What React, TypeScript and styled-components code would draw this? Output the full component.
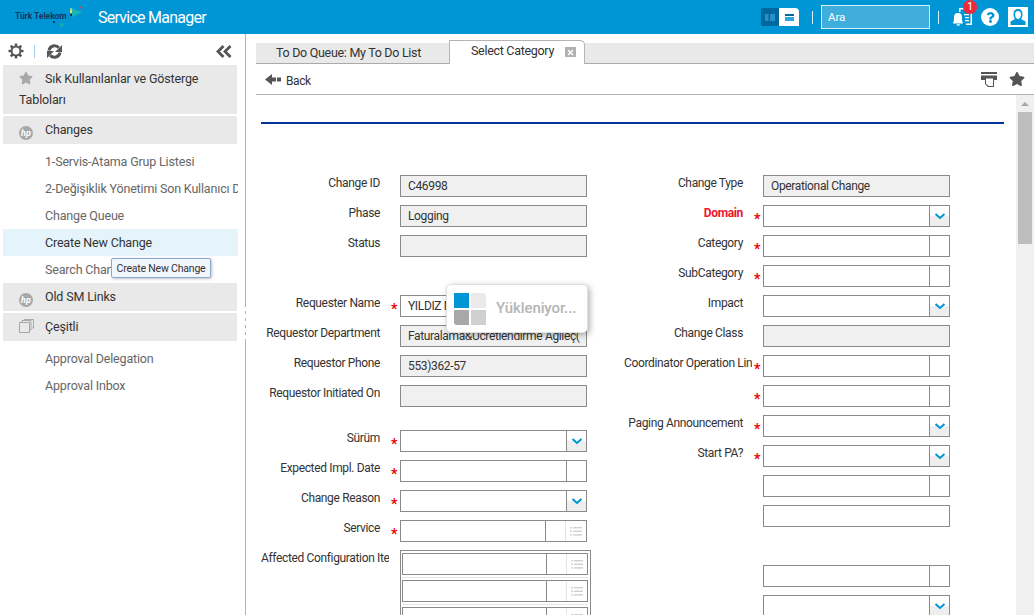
import React from "react";
import styled, { createGlobalStyle } from "styled-components";
import { FaStar, FaQuestion } from "react-icons/fa";

const Global = createGlobalStyle`
  html, body { margin: 0; padding: 0; height: 100%; overflow: hidden; background: #fff; }
  body { font-family: Roboto, "Liberation Sans", sans-serif; font-size: 12px; color: #222; }
  #root { height: 100%; }
  * { box-sizing: border-box; }
`;

const Page = styled.div`
  width: 1034px; height: 615px; display: flex; flex-direction: column; overflow: hidden; position: relative;
`;
const Header = styled.header`
  height: 34px; flex: none; background: #0096d6; display: flex; align-items: center; color: #fff;
`;
const Brand = styled.div`
  width: 98px; height: 34px; flex: none; position: relative;
`;
const BrandText = styled.span`
  position: absolute; left: 15px; top: 11px; font-size: 8.5px; font-weight: 700; letter-spacing: -0.05px; color: #16375e; line-height: 11px; white-space: nowrap;
`;
const BrandMark = styled.svg`
  position: absolute; left: 50px; top: 4px;
`;
const Title = styled.div`
  font-size: 16px; letter-spacing: -0.75px; font-weight: 400; flex: 1;
`;
const HeaderTools = styled.div`
  display: flex; align-items: center; padding-right: 6px;
`;
const ViewToggle = styled.div`
  display: flex; margin-right: 13px;
`;
const ToggleButton = styled.div<{ $active?: boolean }>`
  width: ${(p) => (p.$active ? "20px" : "18px")}; height: 18px; display: flex; align-items: center; justify-content: center;
  background: ${(p) => (p.$active ? "#fff" : "#00689f")};
  border-radius: ${(p) => (p.$active ? "0 4px 0 0" : "2px 0 0 2px")};
`;
const Sep = styled.div`
  width: 1px; height: 13px; background: #d6eefa;
`;
const SearchBox = styled.div`
  width: 109px; height: 24px; margin: 0 8px; border: 1px solid #d8f0fb; background: #40aedd; color: #fff;
  font-size: 11.5px; padding: 0 6px; display: flex; align-items: center; letter-spacing: -.1px;
`;
const Notify = styled.div`
  width: 19px; height: 18px; margin-left: 14px; position: relative;
`;
const Badge = styled.span`
  position: absolute; left: 10px; top: -8px; width: 14px; height: 14px; border-radius: 50%; background: #f0283c;
  color: #fff; font-size: 11px; line-height: 14px; text-align: center;
`;
const HelpIcon = styled.div`
  width: 18px; height: 18px; border-radius: 50%; background: #fff; color: #0096d6; margin-left: 9px;
  display: flex; align-items: center; justify-content: center; font-size: 11px;
`;
const UserIcon = styled.div`
  width: 20px; height: 20px; background: #fff; margin-left: 9px; overflow: hidden;
`;

const Body = styled.div`
  flex: 1; display: flex; min-height: 0;
`;
const Sidebar = styled.aside`
  width: 246px; flex: none; border-right: 1px solid #b4b4b4; padding: 0 8px 0 3px; position: relative;
`;
const Splitter = styled.div`
  position: absolute; right: -1px; top: 270px; width: 1px; height: 38px; background: repeating-linear-gradient(to bottom, #b4b4b4 0 3px, #fff 3px 7px);
`;
const SideTools = styled.div`
  height: 31px; display: flex; align-items: center; color: #555; padding: 3px 5px 0 5px;
`;
const SideSep = styled.div`
  width: 1px; height: 13px; background: #a9cdea; margin: 0 12px 0 10px;
`;
const Spacer = styled.div`
  flex: 1;
`;
const SectionHead = styled.div<{ $tall?: boolean }>`
  background: #e9e9e9; margin-bottom: 2px; color: #333; font-size: 12.5px; line-height: 21px; letter-spacing: -.15px;
  padding: 3px 8px 0 16px;
  height: ${(p) => (p.$tall ? "49px" : "28px")};
`;
const SectionIcon = styled.span`
  display: inline-flex; width: 26px; vertical-align: -2px; letter-spacing: 0;
`;
const HpBadge = styled.span`
  display: inline-block; width: 14px; height: 14px; border-radius: 50%; background: #a8a8a8; color: #fff;
  font-size: 9px; font-style: italic; font-weight: 700; line-height: 14px; text-align: center;
`;
const LinkList = styled.div`
  padding-top: 2px;
`;
const SideLink = styled.div<{ $active?: boolean }>`
  height: 27px; line-height: 27px; padding-left: 42px; font-size: 12.5px; letter-spacing: -.17px; white-space: nowrap; overflow: hidden;
  color: ${(p) => (p.$active ? "#333" : "#666")};
  background: ${(p) => (p.$active ? "#e5f4fb" : "transparent")};
  margin-right: -1px;
`;
const Tooltip = styled.div`
  position: absolute; left: 111px; top: 224px; width: 100px; height: 20px; background: #f2f6fd; border: 1px solid #8ba9d2;
  border-radius: 2px; box-shadow: 1px 1px 3px rgba(0,0,0,.25); font-size: 10.5px; letter-spacing: -.2px; line-height: 19px; text-align: center; color: #333; white-space: nowrap;
`;

const Main = styled.main`
  flex: 1; min-width: 0; display: flex; flex-direction: column; padding-left: 10px;
`;
const TabStrip = styled.div`
  height: 30px; flex: none; display: flex; align-items: flex-end; position: relative; padding-top: 9px;
`;
const TabBack = styled.div`
  flex: 1; height: 21px; background: #e9e9e9; border-bottom: 1px solid #aaa; display: flex; position: relative;
`;
const Tab = styled.div`
  width: 194px; font-size: 12.5px; letter-spacing: -.3px; line-height: 19px; padding-left: 20px; color: #333; white-space: nowrap;
`;
const ActiveTab = styled.div`
  position: absolute; left: 193px; top: -3px; width: 136px; height: 24px; background: #fff; border: 1px solid #b4b4b4; border-bottom: 0; border-radius: 0 5px 0 0;
  font-size: 12.5px; letter-spacing: -.3px; line-height: 19px; padding-left: 21px; color: #333; white-space: nowrap;
`;
const TabClose = styled.span`
  position: absolute; right: 8px; top: 6px; width: 11px; height: 10px; background: #b0b0b0; display: flex; align-items: center; justify-content: center;
`;
const ToolBar = styled.div`
  height: 31px; flex: none; border-bottom: 1px solid #b4b4b4; display: flex; align-items: center; padding: 0 9px 0 9px; color: #555;
`;
const BackLabel = styled.span`
  font-size: 12px; letter-spacing: -.4px; margin-left: 5px; color: #333; padding-top: 3px;
`;
const PrintIcon = styled.svg`
  margin-right: 12px;
`;
const Content = styled.div`
  flex: 1; min-height: 0; display: flex; overflow: hidden;
`;
const FormArea = styled.div`
  flex: 1; padding: 27px 12px 0 5px; overflow: hidden;
`;
const Rule = styled.div`
  height: 2px; background: #003399; margin-bottom: 51px;
`;
const Columns = styled.div`
  display: flex; gap: 37px;
`;
const Column = styled.div`
  width: 326px; flex: none;
`;
const Row = styled.div<{ $gap?: number }>`
  display: grid; grid-template-columns: 128px 11px 187px; height: 30px; margin-top: ${(p) => p.$gap ?? 0}px;
`;
const Blank = styled.div`
  height: 30px;
`;
const Label = styled.div<{ $long?: boolean; $alert?: boolean }>`
  font-size: 12px; letter-spacing: -.35px; line-height: 16px; white-space: nowrap; overflow: hidden;
  text-align: ${(p) => (p.$long ? "left" : "right")};
  padding-right: ${(p) => (p.$long ? "0" : "9px")};
  color: ${(p) => (p.$alert ? "#f0142d" : "#333")};
  font-weight: ${(p) => (p.$alert ? 700 : 400)};
`;
const Star = styled.div`
  color: #e00; font-size: 14px; font-weight: 700; line-height: 14px; padding: 7px 0 0 2px; overflow: hidden;
`;
const Field = styled.div<{ $readOnly?: boolean }>`
  height: 22px; border: 1px solid #8a8a8a; background: ${(p) => (p.$readOnly ? "#f0f0f0" : "#fff")};
  display: flex; font-size: 12px; letter-spacing: -.35px; line-height: 20px; color: #333; overflow: hidden; position: relative;
`;
const FieldText = styled.span`
  flex: 1; padding-left: 7px; white-space: nowrap; overflow: hidden;
`;
const FieldButton = styled.span`
  width: 20px; flex: none; border-left: 1px solid #8a8a8a; position: relative; display: block; height: 20px;
`;
const DropButton = styled(FieldButton)`
  background: linear-gradient(to bottom, #fff 0 50%, #eee 50% 100%);
  display: flex; align-items: center; justify-content: center;
`;
const LookupButton = styled.span`
  width: 21px; flex: none; border-left: 1px solid #e4e4e4; display: flex; align-items: center; justify-content: center;
`;
const MultiBox = styled.div`
  width: 191px; border: 1px solid #8a8a8a; padding: 2px 2px 2px 1px; display: flex; flex-direction: column; gap: 2px;
`;
const MultiRow = styled.div`
  padding-bottom: 2px; border-bottom: 1px solid #e6e6e6;
`;
const Scrollbar = styled.div`
  width: 18px; flex: none; background: #f0f0f0; display: flex; flex-direction: column; align-items: flex-start; padding-left: 2px;
`;
const ScrollArrow = styled.div`
  width: 0; height: 0; border-left: 4px solid transparent; border-right: 4px solid transparent; border-bottom: 4px solid #a6a6a6; margin: 7px 0 6px 3px;
`;
const ScrollThumb = styled.div`
  width: 14px; height: 132px; background: #bdbdbd;
`;
const Loader = styled.div`
  position: absolute; left: 446px; top: 284px; width: 142px; height: 49px; background: #fff; border: 1px solid #e0e0e0; border-radius: 5px;
  box-shadow: 2px 2px 6px rgba(0,0,0,.3); display: flex; align-items: center; padding-left: 7px; gap: 10px;
`;
const LoaderGrid = styled.div`
  display: grid; grid-template-columns: 15px 15px; grid-template-rows: 15px 15px; gap: 2px;
`;
const LoaderCell = styled.span<{ $c: string; $r?: string }>`
  background: ${(p) => p.$c}; border-radius: ${(p) => p.$r ?? "0"};
`;
const LoaderText = styled.span`
  font-size: 15px; font-weight: 500; color: #b5b5b5; letter-spacing: -.1px; padding-bottom: 2px;
`;

const Chevron = () => (
  <svg width="12" height="8" viewBox="0 0 12 8"><path d="M1.500 2 6 6l4.500-4" fill="none" stroke="#0096d6" strokeWidth="2" /></svg>
);
const ListIcon = () => (
  <svg width="12" height="11" viewBox="0 0 12 11" fill="#d0d0d0">
    <rect x="0" y="1" width="2" height="1.400" /><rect x="3" y="1" width="9" height="1.400" />
    <rect x="0" y="4.600" width="2" height="1.400" /><rect x="3" y="4.600" width="9" height="1.400" />
    <rect x="0" y="8.200" width="2" height="1.400" /><rect x="3" y="8.200" width="9" height="1.400" />
  </svg>
);
const Gear = () => (
  <svg width="16" height="16" viewBox="0 0 16 16" fill="#555">
    <path d="M8 2.500a5.500 5.500 0 1 0 0 11 5.500 5.500 0 0 0 0-11zm0 2a3.500 3.500 0 1 1 0 7 3.500 3.500 0 0 1 0-7z" fillRule="evenodd" />
    {[0, 45, 90, 135, 180, 225, 270, 315].map((a) => (
      <rect key={a} x="6.800" y="0.500" width="2.400" height="2.500" transform={`rotate(${a} 8 8)`} />
    ))}
  </svg>
);
const Refresh = () => (
  <svg width="15" height="15" viewBox="0 0 15 15" fill="none" stroke="#555" strokeWidth="3">
    <path d="M2 6.500A5.600 5.600 0 0 1 11.800 3.800" />
    <path d="M13 8.500A5.600 5.600 0 0 1 3.200 11.200" />
    <path d="M15 1v7H8zM0 14V7h7z" fill="#555" stroke="none" />
  </svg>
);
const DoubleLeft = () => (
  <svg width="16" height="13" viewBox="0 0 16 13" fill="none" stroke="#555" strokeWidth="2.800">
    <path d="M7.500 1 2 6.500 7.500 12M14.500 1 9 6.500l5.500 5.500" />
  </svg>
);

type Kind = "ro" | "plain" | "date" | "drop" | "lookup";
const Input = ({ kind, value }: { kind: Kind; value?: string }) => (
  <Field $readOnly={kind === "ro"}>
    <FieldText>{value}</FieldText>
    {kind === "date" && <FieldButton />}
    {kind === "drop" && <DropButton><Chevron /></DropButton>}
    {kind === "lookup" && <><FieldButton /><LookupButton><ListIcon /></LookupButton></>}
  </Field>
);

type RowDef = { label?: string; star?: boolean; kind: Kind; value?: string; long?: boolean; alert?: boolean; gap?: number };
const FormRow = ({ label, star, kind, value, long, alert, gap }: RowDef) => (
  <Row $gap={gap}>
    <Label $long={long} $alert={alert}>{label}</Label>
    <Star>{star ? "*" : ""}</Star>
    <Input kind={kind} value={value} />
  </Row>
);

const leftA: RowDef[] = [
  { label: "Change ID", kind: "ro", value: "C46998" },
  { label: "Phase", kind: "ro", value: "Logging" },
  { label: "Status", kind: "ro" },
];
const leftB: RowDef[] = [
  { label: "Requester Name", star: true, kind: "plain", value: "YILDIZ M" },
  { label: "Requestor Department", kind: "ro", value: "Faturalama&Ucretlendirme Agileç(" },
  { label: "Requestor Phone", kind: "ro", value: "553)362-57" },
  { label: "Requestor Initiated On", kind: "ro" },
  { label: "Sürüm", star: true, kind: "drop", gap: 15 },
  { label: "Expected Impl. Date", star: true, kind: "date" },
  { label: "Change Reason", star: true, kind: "drop" },
  { label: "Service", star: true, kind: "lookup" },
];
const rightA: RowDef[] = [
  { label: "Change Type", kind: "ro", value: "Operational Change" },
  { label: "Domain", alert: true, star: true, kind: "drop" },
  { label: "Category", star: true, kind: "date" },
  { label: "SubCategory", star: true, kind: "date" },
  { label: "Impact", kind: "drop" },
  { label: "Change Class", kind: "ro" },
  { label: "Coordinator Operation Lin", long: true, star: true, kind: "date" },
  { star: true, kind: "date" },
  { label: "Paging Announcement", star: true, kind: "drop" },
  { label: "Start PA?", star: true, kind: "drop" },
  { kind: "date" },
  { kind: "plain" },
];
const rightB: RowDef[] = [{ kind: "date" }, { kind: "drop" }];

export default function App() {
  return (
    <Page>
      <Global />
      <Header>
        <Brand>
          <BrandText>Türk Telekom</BrandText>
          <BrandMark width="36" height="26" viewBox="0 0 36 26">
            <path d="M22 4 32 8.500 22 13z" fill="#19b5b8" />
            <path d="M10 18.500 15 21l-5 2.500z" fill="#1ba8b5" />
            <rect x="20" y="4" width="2" height="2" fill="#7ed0a0" />
            <rect x="20" y="6" width="2" height="3" fill="#e8e04a" />
            <rect x="20" y="10" width="2" height="2" fill="#16375e" />
            <rect x="30" y="2.500" width="2" height="2" fill="#e0484f" />
            <rect x="3" y="17" width="2" height="2" fill="#16375e" />
          </BrandMark>
        </Brand>
        <Title>Service Manager</Title>
        <HeaderTools>
          <ViewToggle>
            <ToggleButton>
              <svg width="10" height="7" viewBox="0 0 10 7" fill="#2a8fc4"><rect width="3.500" height="7" /><rect x="5" width="5" height="7" /></svg>
            </ToggleButton>
            <ToggleButton $active>
              <svg width="9" height="7" viewBox="0 0 9 7"><rect width="9" height="2" fill="#00689f" /><rect y="3" width="9" height="4" fill="#2aa5dd" /></svg>
            </ToggleButton>
          </ViewToggle>
          <Sep />
          <SearchBox>Ara</SearchBox>
          <Sep />
          <Notify>
            <svg width="19" height="18" viewBox="0 0 19 18" fill="#fff">
              <path d="M6 0h13v17h-6v-1.500h4.500V1.500H7.500V4H6z" />
              <path d="M11 6h5v1.300h-5zM12 9h4v1.300h-4zM12 12h4v1.300h-4z" />
              <path d="M5.500 5c2.300 0 3.500 1.800 3.500 4v3l1 3.500H0l1-3.500V9c0-2.200 1.200-4 3.500-4zM3.500 16.300h3.500a1.750 1.500 0 0 1-3.500 0z" />
            </svg>
            <Badge>1</Badge>
          </Notify>
          <HelpIcon><FaQuestion size={11} /></HelpIcon>
          <UserIcon>
            <svg width="20" height="20" viewBox="0 0 20 20">
              <path d="M10 2c3 0 4.500 2 4.500 5 0 2-.5 4-1.500 5l4.500 2.500V18H2.500v-3.500L7 12c-1-1-1.500-3-1.500-5 0-3 1.500-5 4.500-5z" fill="#0096d6" />
              <path d="M10 4c2 0 3 1.500 3 3.500s-1 4.500-3 4.500-3-2.500-3-4.500S8 4 10 4z" fill="#fff" />
            </svg>
          </UserIcon>
        </HeaderTools>
      </Header>
      <Body>
        <Sidebar>
          <SideTools>
            <Gear />
            <SideSep />
            <Refresh />
            <Spacer />
            <DoubleLeft />
          </SideTools>
          <SectionHead $tall>
            <SectionIcon><FaStar size={14} color="#a8a8a8" /></SectionIcon>Sık Kullanılanlar ve Gösterge Tabloları
          </SectionHead>
          <SectionHead>
            <SectionIcon><HpBadge>hp</HpBadge></SectionIcon>Changes
          </SectionHead>
          <LinkList>
            <SideLink>1-Servis-Atama Grup Listesi</SideLink>
            <SideLink>2-Değişiklik Yönetimi Son Kullanıcı D</SideLink>
            <SideLink>Change Queue</SideLink>
            <SideLink $active>Create New Change</SideLink>
            <SideLink>Search Change</SideLink>
          </LinkList>
          <SectionHead>
            <SectionIcon><HpBadge>hp</HpBadge></SectionIcon>Old SM Links
          </SectionHead>
          <SectionHead>
            <SectionIcon>
              <svg width="15" height="14" viewBox="0 0 15 14" fill="none" stroke="#a8a8a8"><rect x=".5" y="3.500" width="10" height="10" fill="#e9e9e9" /><path d="M3 3V1.500h9V11h-1.500M5.500 1V.5h9V9H13" /></svg>
            </SectionIcon>Çeşitli
          </SectionHead>
          <LinkList>
            <SideLink>Approval Delegation</SideLink>
            <SideLink>Approval Inbox</SideLink>
          </LinkList>
          <Tooltip>Create New Change</Tooltip>
          <Splitter />
        </Sidebar>
        <Main>
          <TabStrip>
            <TabBack>
              <Tab>To Do Queue: My To Do List</Tab>
              <ActiveTab>
                Select Category
                <TabClose>
                  <svg width="7" height="7" viewBox="0 0 7 7" stroke="#fff" strokeWidth="1.500"><path d="M1 1l5 5M6 1 1 6" /></svg>
                </TabClose>
              </ActiveTab>
            </TabBack>
          </TabStrip>
          <ToolBar>
            <svg width="16" height="11" viewBox="0 0 16 11" fill="#555"><path d="M0 5.500 7 0v3.500h4v4H7V11zM12 3.500h4v4h-4z" /></svg>
            <BackLabel>Back</BackLabel>
            <Spacer />
            <PrintIcon width="16" height="15" viewBox="0 0 16 15" fill="#555">
              <rect width="16" height="2" />
              <path d="M0 3.500h16V8h-3v7H7L4 12V8H0z" />
              <path d="M5 6.500h7V14H7.500L5 11.500z" fill="#fff" />
            </PrintIcon>
            <FaStar size={16} />
          </ToolBar>
          <Content>
            <FormArea>
              <Rule />
              <Columns>
                <Column>
                  {leftA.map((r) => <FormRow key={r.label} {...r} />)}
                  <Blank />
                  {leftB.map((r) => <FormRow key={r.label} {...r} />)}
                  <Row>
                    <Label $long>Affected Configuration Ite</Label>
                    <Star />
                    <MultiBox>
                      {[0, 1, 2].map((i) => <MultiRow key={i}><Input kind="lookup" /></MultiRow>)}
                    </MultiBox>
                  </Row>
                </Column>
                <Column>
                  {rightA.map((r, i) => <FormRow key={i} {...r} />)}
                  <Blank />
                  {rightB.map((r, i) => <FormRow key={i} {...r} />)}
                </Column>
              </Columns>
            </FormArea>
            <Scrollbar>
              <ScrollArrow />
              <ScrollThumb />
            </Scrollbar>
          </Content>
        </Main>
      </Body>
      <Loader>
        <LoaderGrid>
          <LoaderCell $c="#0096d6" />
          <LoaderCell $c="#eaeaea" $r="0 3px 0 0" />
          <LoaderCell $c="#a8a8a8" $r="0 0 0 3px" />
          <LoaderCell $c="#d0d0d0" />
        </LoaderGrid>
        <LoaderText>Yükleniyor...</LoaderText>
      </Loader>
    </Page>
  );
}
